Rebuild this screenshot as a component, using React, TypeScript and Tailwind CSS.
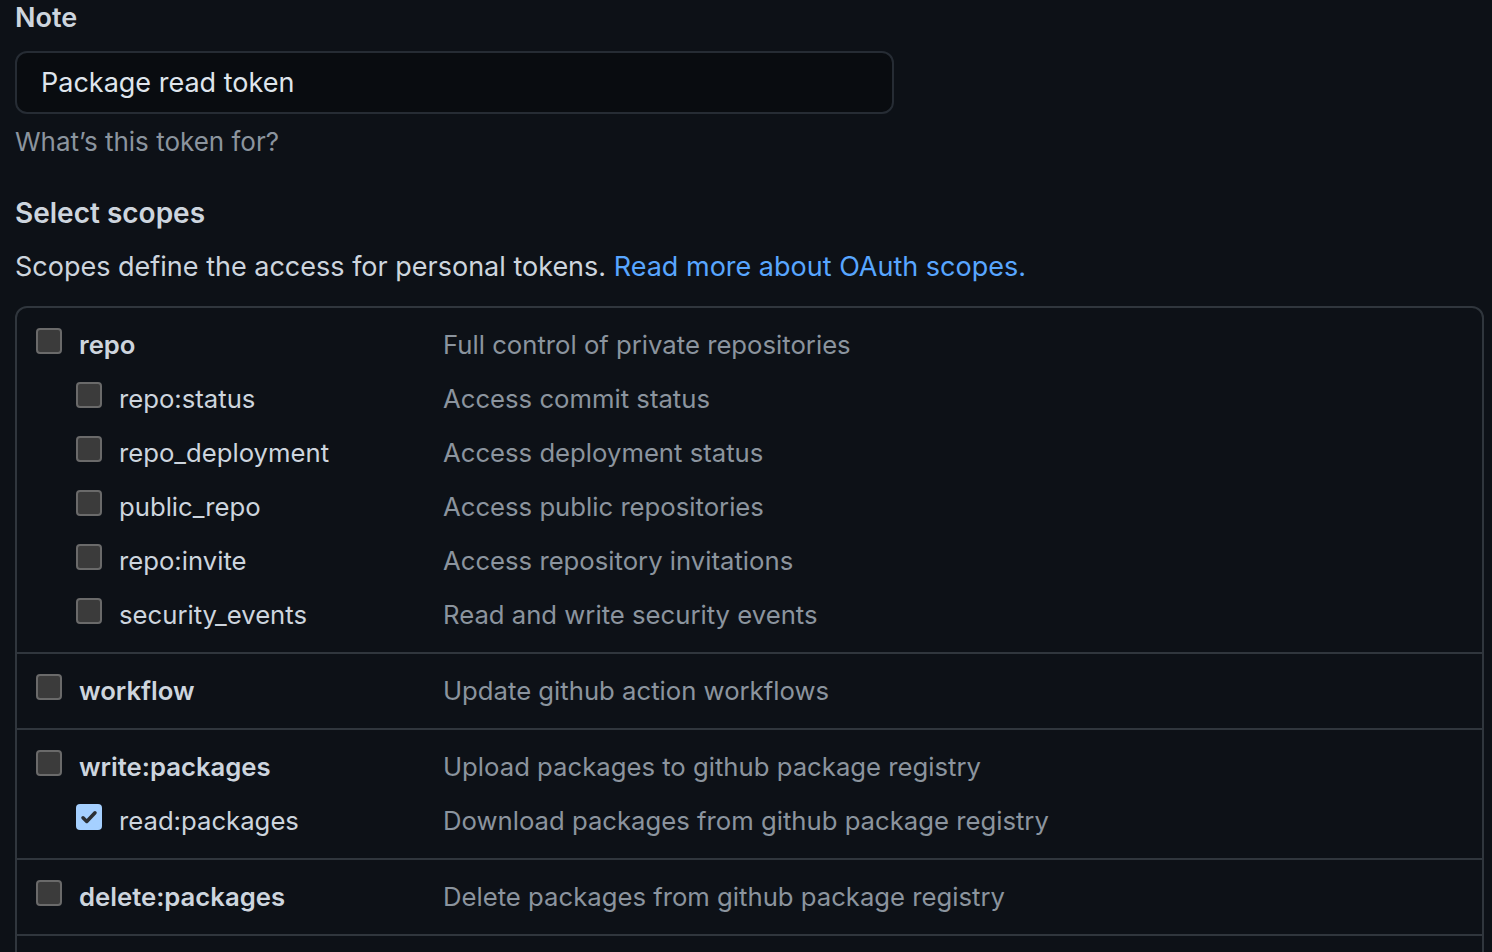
import { useState } from 'react'

interface Scope {
  name: string
  description: string
  checked?: boolean
  children?: { name: string; description: string; checked?: boolean }[]
}

const scopes: Scope[] = [
  {
    name: 'repo',
    description: 'Full control of private repositories',
    children: [
      { name: 'repo:status', description: 'Access commit status' },
      { name: 'repo_deployment', description: 'Access deployment status' },
      { name: 'public_repo', description: 'Access public repositories' },
      { name: 'repo:invite', description: 'Access repository invitations' },
      { name: 'security_events', description: 'Read and write security events' },
    ],
  },
  { name: 'workflow', description: 'Update github action workflows' },
  {
    name: 'write:packages',
    description: 'Upload packages to github package registry',
    children: [
      { name: 'read:packages', description: 'Download packages from github package registry', checked: true },
    ],
  },
  { name: 'delete:packages', description: 'Delete packages from github package registry' },
  { name: 'admin:org', description: 'Full control of orgs and teams, read and write org projects' },
]

function Checkbox({ checked }: { checked?: boolean }) {
  if (checked) {
    return (
      <div className="flex h-[26px] w-[26px] shrink-0 items-center justify-center rounded-[4px] bg-[#a5d0ff]">
        <svg viewBox="0 0 16 16" className="h-[20px] w-[20px]" fill="none" stroke="#2b2f33" strokeWidth="2.8" strokeLinecap="round" strokeLinejoin="round">
          <path d="M3.2 8.6l3 3 6.6-7" />
        </svg>
      </div>
    )
  }
  return <div className="h-[26px] w-[26px] shrink-0 rounded-[4px] border-2 border-[#6a6a6a] bg-[#3b3b3b]" />
}

function Row({ name, description, checked, child, bold }: { name: string; description: string; checked?: boolean; child?: boolean; bold?: boolean }) {
  return (
    <div className="flex h-[54px] items-center">
      <div className={`flex w-[426px] shrink-0 items-center ${child ? 'pl-[59px]' : 'pl-[19px]'}`}>
        <div className="-mt-[8px]">
          <Checkbox checked={checked} />
        </div>
        <span className={`ml-[17px] text-[#cdd5de] ${bold ? 'font-semibold' : ''}`}>{name}</span>
      </div>
      <span className="text-[#8b949e]">{description}</span>
    </div>
  )
}

export default function App() {
  const [note, setNote] = useState('Package read token')
  return (
    <div className="h-screen overflow-hidden bg-[#0d1117] pl-[15px] pr-[8px] text-[27px] leading-[36px] text-[#cdd5de] [font-family:Inter,'Noto_Sans',sans-serif]">
      <label className="block font-semibold">Note</label>
      <input
        value={note}
        onChange={(e) => setNote(e.target.value)}
        className="mt-[15px] block h-[63px] w-[879px] rounded-[12px] border-2 border-[#262c34] bg-[#090c10] px-[24px] text-[27px] text-[#dfe5ec] outline-none"
      />
      <p className="mt-[10px] text-[26px] text-[#8b949e]">What’s this token for?</p>

      <h3 className="mt-[35px] text-[28px] font-semibold">Select scopes</h3>
      <p className="mt-[18px]">
        Scopes define the access for personal tokens.{' '}
        <a className="text-[#58a6ff]">Read more about OAuth scopes.</a>
      </p>

      <div className="mt-[21px] rounded-[12px] border-2 border-[#30363d] text-[25.7px]">
        {scopes.map((s, i) => (
          <div key={s.name} className={`py-[10px] ${i > 0 ? 'border-t-2 border-[#30363d]' : ''}`}>
            <Row name={s.name} description={s.description} checked={s.checked} bold />
            {s.children?.map((c) => (
              <Row key={c.name} name={c.name} description={c.description} checked={c.checked} child />
            ))}
          </div>
        ))}
      </div>
    </div>
  )
}
